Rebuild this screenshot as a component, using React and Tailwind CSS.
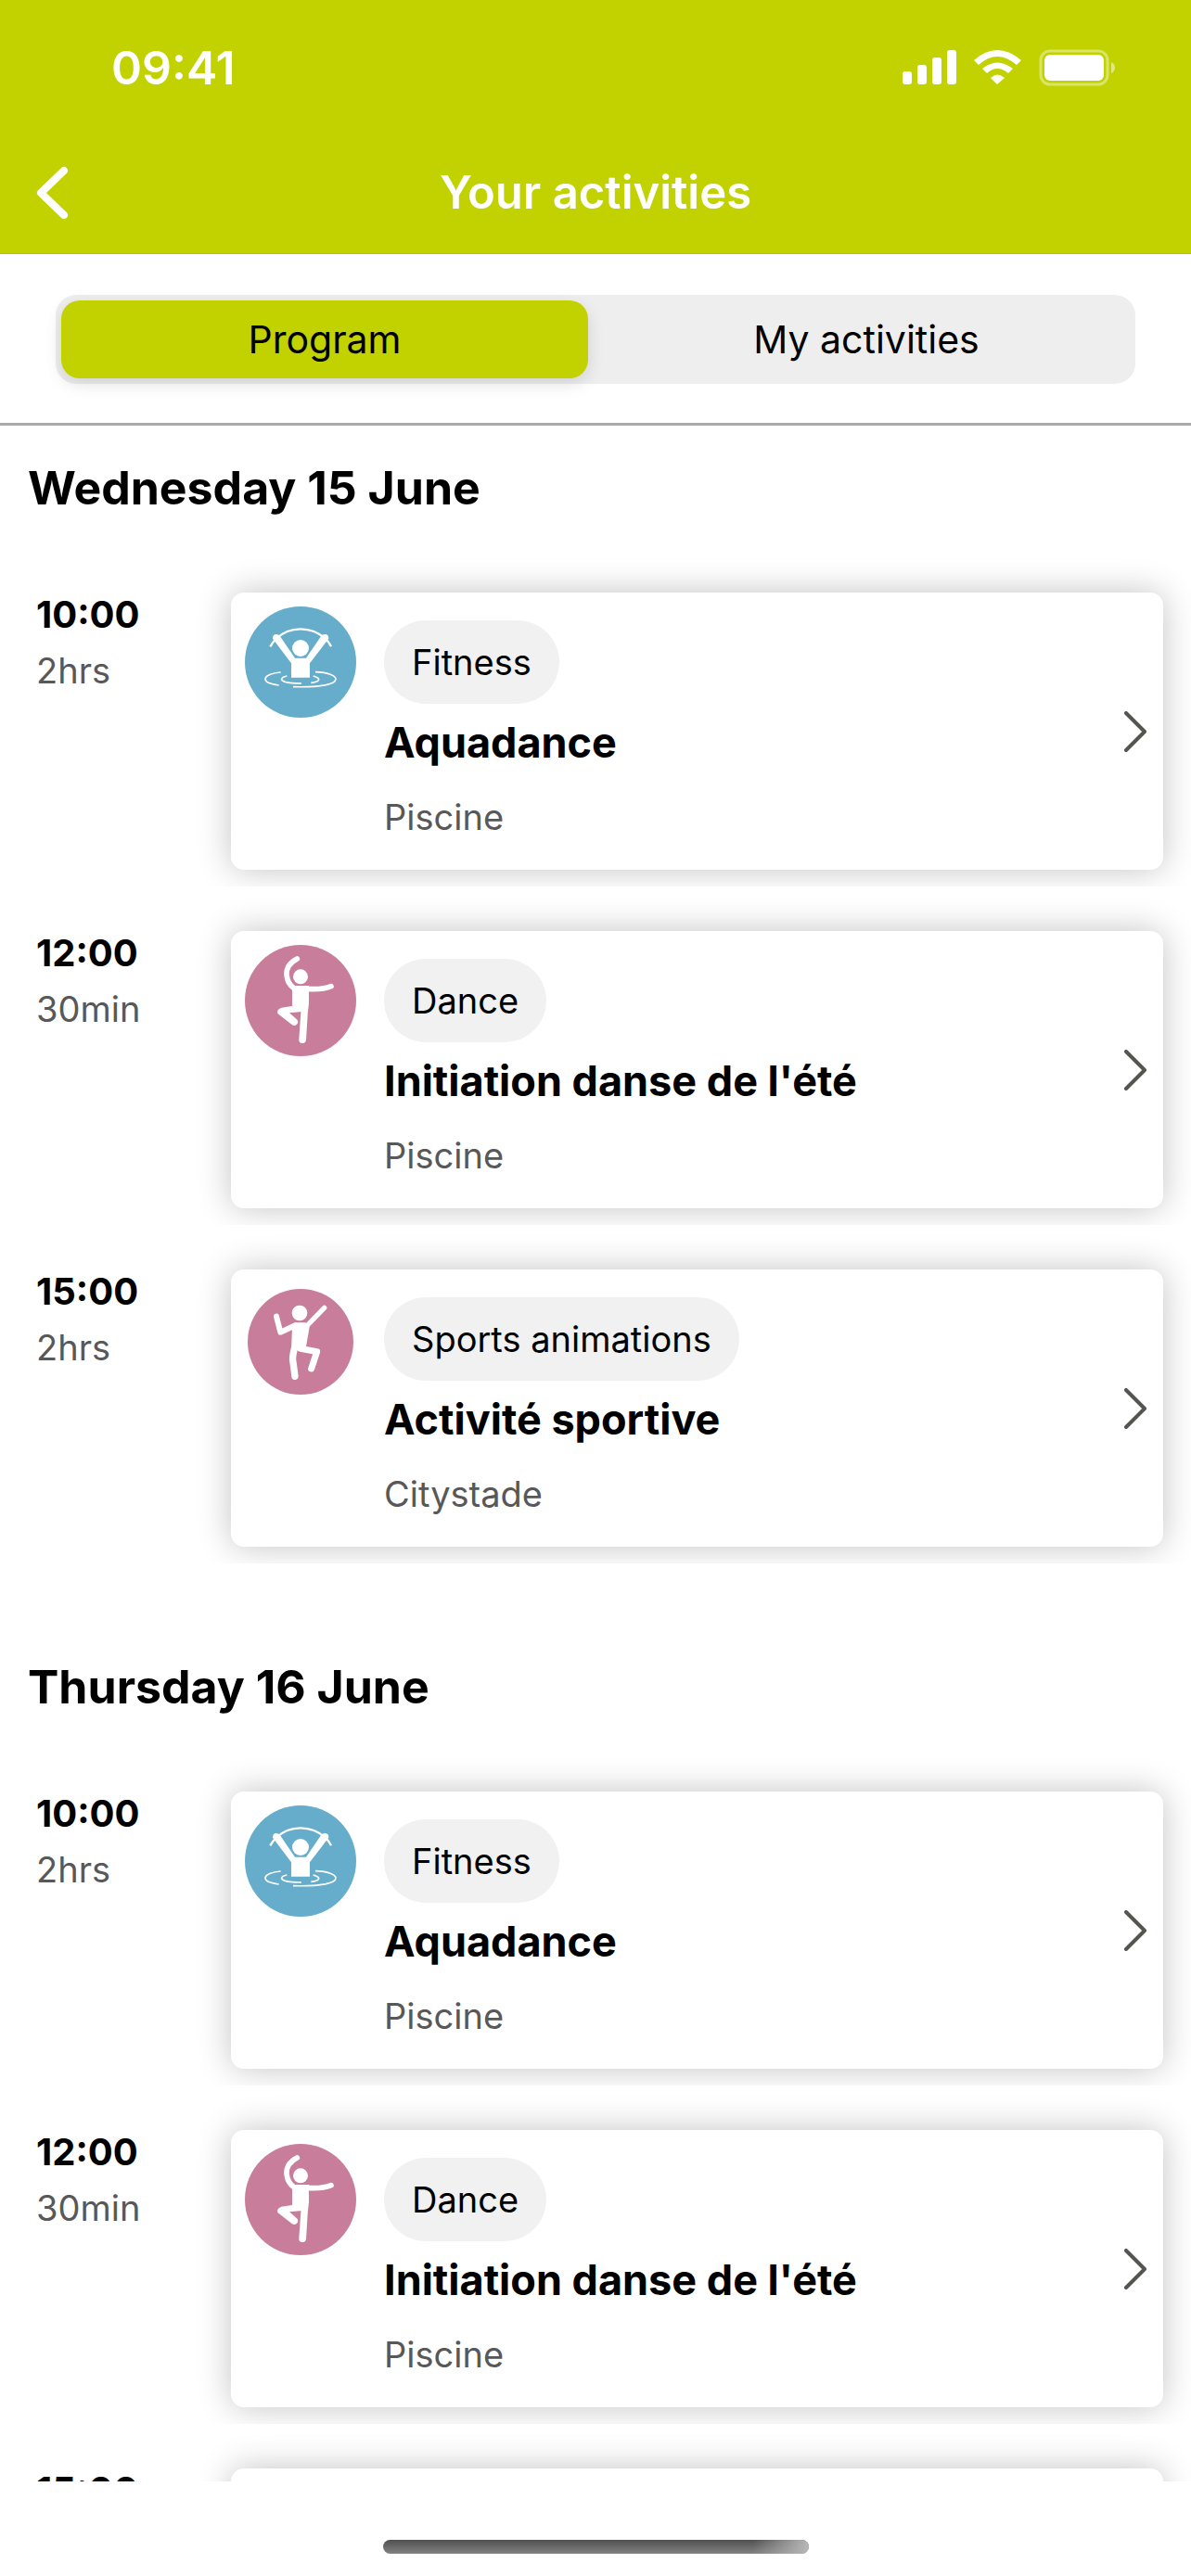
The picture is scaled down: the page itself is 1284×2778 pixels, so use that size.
import { useState } from 'react'

const activities = [
  { time: '10:00', duration: '2hrs', category: 'Fitness', title: 'Aquadance', place: 'Piscine', icon: 'aqua' },
  { time: '12:00', duration: '30min', category: 'Dance', title: "Initiation danse de l'été", place: 'Piscine', icon: 'dance' },
  { time: '15:00', duration: '2hrs', category: 'Sports animations', title: 'Activité sportive', place: 'Citystade', icon: 'sport' },
]

const days = [
  { id: 'wed', label: 'Wednesday 15 June', activities },
  { id: 'thu', label: 'Thursday 16 June', activities },
]

const tabs = ['Program', 'My activities']

function AquaIcon() {
  return (
    <svg viewBox="42 42 360 360" className="size-[120px]" fill="none" stroke="white" aria-hidden="true">
      <circle cx="222" cy="222" r="180" fill="#66accb" stroke="none" />
      <circle cx="222" cy="177" r="27" fill="white" stroke="none" />
      <path d="M124 172Q132 158 142 147Q176 115 222 115Q268 115 304 147Q314 158 321 172" strokeWidth="7" />
      <path d="M132 146Q132 132 143 132Q151 132 156 139L204 209H240L288 139Q293 132 301 132Q313 132 313 146L252 226V272H192V226Z" fill="white" stroke="none" />
      <path d="M158 255C130 257 108 266 108 277C108 287 126 294 152 297" strokeWidth="5" />
      <path d="M178 267C156 272 156 281 172 286Q190 291 225 291" strokeWidth="5" />
      <path d="M263 267C282 272 285 279 276 284Q270 288 256 289" strokeWidth="5" />
      <path d="M270 254C310 255 336 266 336 277C336 294 290 304 198 302" strokeWidth="5" />
    </svg>
  )
}

function DanceIcon() {
  return (
    <svg viewBox="42 42 360 360" className="size-[120px]" fill="none" stroke="white" strokeLinecap="round" aria-hidden="true">
      <circle cx="222" cy="222" r="180" fill="#c87e9a" stroke="none" />
      <circle cx="222" cy="145" r="24" fill="white" stroke="none" />
      <path d="M211 87C182 102 176 119 177 138Q179 168 203 184" strokeWidth="17" />
      <path d="M245 184Q290 188 321 176" strokeWidth="17" />
      <path d="M204 174H249V230L246 258H195V188Z" fill="white" stroke="none" />
      <path d="M224 248L246 252L240 350Q238 360 227 360Q216 359 217 347Z" fill="white" stroke="none" />
      <path d="M200 239L160 245Q144 251 148 264L195 301Q205 306 212 297Q217 288 208 281L186 262L228 258Z" fill="white" stroke="none" />
    </svg>
  )
}

function SportIcon() {
  return (
    <svg viewBox="42 27 360 360" className="size-[120px]" fill="none" stroke="white" strokeLinecap="round" strokeLinejoin="round" aria-hidden="true">
      <circle cx="222" cy="216" r="171" fill="#c87e9a" stroke="none" />
      <circle cx="219" cy="123" r="25" fill="white" stroke="none" />
      <path d="M144 134L157 185L205 163" strokeWidth="18" />
      <path d="M299 106L242 165" strokeWidth="16" />
      <path d="M204 154H238L251 168L238 243H192L195 172Z" fill="white" stroke="none" />
      <path d="M202 238Q194 270 198 282L204 328" strokeWidth="22" />
      <path d="M222 238L275 248L257 303" strokeWidth="21" />
    </svg>
  )
}

const icons = { aqua: AquaIcon, dance: DanceIcon, sport: SportIcon }

function StatusBar() {
  return (
    <div className="flex h-[146px] items-center justify-between pr-[81px] pl-[120px]">
      <span className="text-[50px] leading-none font-semibold">09:41</span>
      <svg viewBox="0 0 230 40" className="h-10 w-[230px]" fill="white" aria-hidden="true">
        <rect x="0" y="24" width="10" height="14" rx="3" />
        <rect x="16" y="17" width="10" height="21" rx="3" />
        <rect x="32" y="9" width="10" height="29" rx="3" />
        <rect x="48" y="1" width="10" height="37" rx="3" />
        <path d="M77 12Q102 -10 128 12L123 17Q102 -1 82 17Z" />
        <path d="M86 21Q102 8 119 21L114 26Q102 16 91 26Z" />
        <path d="M95 31Q102 24 110 31L102 38Z" />
        <rect x="149" y="2" width="72" height="36" rx="10" fill="none" stroke="white" strokeOpacity="0.4" strokeWidth="3" />
        <rect x="153" y="6" width="64" height="28" rx="6" />
        <path d="M225 14Q229 16 229 20T225 26Z" fillOpacity="0.5" />
      </svg>
    </div>
  )
}

function ActivityRow({ activity }) {
  const Icon = icons[activity.icon]
  return (
    <li className="relative flex bg-white pt-12 pr-[30px] pb-[18px]">
      <div className="w-[249px] shrink-0 pl-[39px]">
        <p className="text-[40px] leading-[48px] font-bold">{activity.time}</p>
        <p className="mt-3 text-[38px] leading-[48px] text-[#585858]">{activity.duration}</p>
      </div>
      <a href="#activity" className="flex h-[299px] min-w-0 flex-1 rounded-[14px] bg-white pt-[15px] pr-[18px] pl-[15px] shadow-[0_0_36px_rgba(0,0,0,0.24)]">
        <div className="shrink-0">
          <Icon />
        </div>
        <div className="ml-[30px] min-w-0 flex-1 pt-[15px]">
          <span className="inline-flex h-[90px] items-center rounded-full bg-[#f1f1f1] px-[30px] text-[38px]">
            {activity.category}
          </span>
          <h3 className="mt-[14px] text-[45px] leading-[56px] font-bold">{activity.title}</h3>
          <p className="mt-7 text-[38px] leading-[48px] text-[#585858]">{activity.place}</p>
        </div>
        <svg viewBox="0 0 24 44" className="mb-[15px] h-11 w-6 shrink-0 self-center" fill="none" stroke="#555550" strokeWidth="4" strokeLinecap="round" strokeLinejoin="round" aria-hidden="true">
          <path d="M2 2L22 22L2 42" />
        </svg>
      </a>
    </li>
  )
}

export default function App() {
  const [activeTab, setActiveTab] = useState('Program')

  return (
    <div className="flex h-screen flex-col overflow-hidden bg-white font-['Inter','Liberation_Sans',sans-serif] text-black">
      <header className="shrink-0 border-b border-[#a9a9a9] bg-[#c1d200] text-white">
        <StatusBar />
        <div className="grid h-[127px] grid-cols-[120px_1fr_120px] items-center pb-1">
          <button type="button" aria-label="Back" className="pl-[38px]">
            <svg viewBox="0 0 36 60" className="h-[60px] w-9" fill="none" stroke="white" strokeWidth="8" strokeLinecap="round" strokeLinejoin="round" aria-hidden="true">
              <path d="M31 6L6 30L31 54" />
            </svg>
          </button>
          <h1 className="text-center text-[49px] leading-none font-semibold">Your activities</h1>
        </div>
      </header>

      <nav className="shrink-0 border-b-[3px] border-[#a9a9a9] px-[60px] pt-11 pb-[42px]">
        <div role="tablist" className="flex h-24 gap-4 rounded-[22px] bg-[#eeeeee] p-[6px]">
          {tabs.map((tab) => (
            <button
              key={tab}
              type="button"
              role="tab"
              aria-selected={activeTab === tab}
              onClick={() => setActiveTab(tab)}
              className={
                activeTab === tab
                  ? 'flex-1 rounded-[20px] bg-[#c1d200] pt-[2px] text-[41px] shadow-[0_6px_18px_rgba(0,0,0,0.12)]'
                  : 'flex-1 rounded-[20px] pt-[2px] text-[41px]'
              }
            >
              {tab}
            </button>
          ))}
        </div>
      </nav>

      <main className="min-h-0 flex-1 overflow-hidden">
        {days.map((day) => (
          <section key={day.id} className="relative bg-white pt-[66px] first:pt-0">
            <h2 className="flex h-[132px] items-center px-[30px] pt-[2px] text-[50px] leading-none font-bold">{day.label}</h2>
            <ul>
              {day.activities.map((activity) => (
                <ActivityRow key={activity.time} activity={activity} />
              ))}
            </ul>
          </section>
        ))}
      </main>

      {/* Home indicator */}
      <footer className="flex h-[102px] shrink-0 justify-center pt-[63px]">
        <div className="flex h-[15px] w-[459px] justify-end overflow-hidden rounded-full bg-linear-to-b from-[#505050] to-[#838383]">
          <div className="w-[60px] bg-linear-to-r from-transparent to-[#b8b8b8]" />
        </div>
      </footer>
    </div>
  )
}
